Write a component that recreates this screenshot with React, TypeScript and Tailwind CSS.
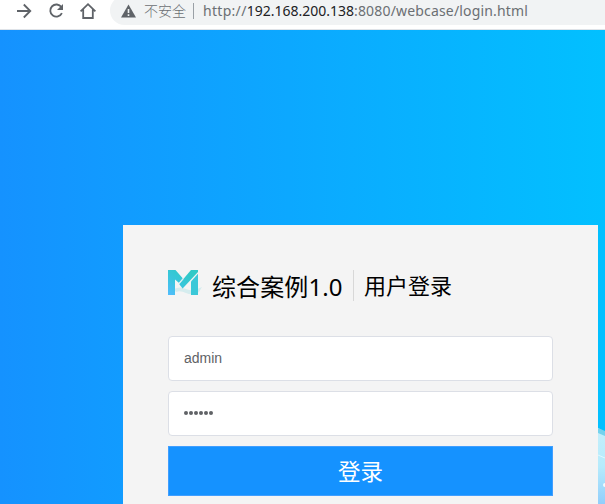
function Toolbar() {
  return (
    <header className="flex h-[30px] items-start border-b border-[#dfe3e8] bg-white">
      <svg className="h-[29px] w-[110px] shrink-0" viewBox="0 0 110 29" fill="none" stroke="#5f6368" strokeWidth="1.8">
        <path d="M17 11H30M23.8 4.5L30.3 11L23.8 17.5" />
        <path d="M61.4 7.1A6.1 6.1 0 1 0 61.9 13.2" />
        <path d="M63 4V10H57Z" fill="#5f6368" stroke="none" />
        <path d="M80.6 11.4L88 4.2L95.4 11.4M83.2 9.5V18H92.8V9.5" />
      </svg>
      <div className="-mt-1 flex h-[29px] flex-1 items-center rounded-l-full bg-[#f1f3f4] pt-[1px] pl-[11px] font-['Noto_Sans','Noto_Sans_CJK_SC',sans-serif] text-[14px] leading-5 text-[#6b6f73]">
        <svg className="mr-[8px] h-[14px] w-[15px] shrink-0" viewBox="0 0 15 14">
          <path d="M7.5 0.5L15 13.5H0Z" fill="#5f6368" />
          <path d="M6.7 5H8.3V9H6.7ZM6.7 10.3H8.3V11.9H6.7Z" fill="#f1f3f4" />
        </svg>
        <span className="-mt-[2px] w-[43px] font-['Noto_Sans_CJK_SC',sans-serif] font-light whitespace-nowrap">不安全</span>
        <span className="mr-[9px] ml-[6px] h-4 w-px bg-[#9aa0a6]" />
        <span className="whitespace-nowrap">
          <span className="tracking-[0.3px]">http://</span>
          <span className="text-[#202124]">192.168.200.138</span>
          <span className="tracking-[0.17px]">:8080/webcase/login.html</span>
        </span>
      </div>
    </header>
  );
}

function Logo() {
  return (
    <svg className="h-[30px] w-[36px] shrink-0" viewBox="0 0 36 30">
      <defs>
        <linearGradient id="logo" gradientUnits="userSpaceOnUse" x1="2" y1="25" x2="20" y2="3">
          <stop offset="0" stopColor="#50bdfb" />
          <stop offset="0.5" stopColor="#38c6dc" />
          <stop offset="1" stopColor="#30c9c7" />
        </linearGradient>
      </defs>
      <path d="M6 19Q12 16 18 19T34 17L31 22Q24 26 18 23T8 22Z" fill="#d5ecee" />
      <path d="M0 0H7.5L14.7 8.2L10.8 12.8L7 9.5V25H0Z" fill="url(#logo)" />
      <path d="M23 0H30V2L14.6 18.6L11.3 14.2L15.4 9Z" fill="url(#logo)" />
      <path d="M30 3.8V25H23V11.4Z" fill="#3bc8d8" />
      <path d="M11 14L15.3 9" fill="none" stroke="#bdeaf0" strokeWidth="0.8" />
    </svg>
  );
}

export default function App() {
  return (
    <div className="flex h-[504px] w-[605px] flex-col overflow-hidden">
      <Toolbar />
      <main className="relative flex flex-1 bg-linear-[90deg] from-[#1592ff] to-[#02c0ff] pt-[195px] pl-[123px]">
        <svg className="absolute right-0 bottom-0 h-[78px] w-[7px]" viewBox="0 0 7 78">
          <defs>
            <linearGradient id="bubble" x1="0" y1="0" x2="0" y2="1">
              <stop offset="0" stopColor="#c4effb" />
              <stop offset="0.5" stopColor="#b6ebfc" />
              <stop offset="1" stopColor="#91cefb" />
            </linearGradient>
          </defs>
          <path d="M0 2L7 6V78H0Z" fill="url(#bubble)" />
          <path d="M0 2L7 5V10L0 7Z" fill="#74d2ed" />
          <path d="M0 29L7 32" stroke="#e0f8ff" />
          <circle cx="7" cy="59" r="2" fill="#f2fbff" />
        </svg>
        <section className="flex w-[475px] shrink-0 flex-col bg-[#f4f4f4] px-[45px] pt-[45px]">
          <div className="flex h-[66px] items-start font-['Noto_Sans','Noto_Sans_CJK_SC',sans-serif] text-black">
            <Logo />
            <h1 className="ml-[8px] w-[141px] pt-[1px] text-[24px] leading-[32px] tracking-[0.1px] whitespace-nowrap">综合案例1.0</h1>
            <h2 className="h-[31px] border-l border-[#d8d8d8] pl-[10px] font-['Noto_Sans_CJK_SC',sans-serif] text-[22px] leading-[29px] whitespace-nowrap">用户登录</h2>
          </div>
          <form className="flex flex-col gap-[10px]">
            <input className="h-[45px] w-full rounded-[4px] border border-[#dcdfe6] bg-white px-[15px] pb-[2px] font-['Liberation_Sans',sans-serif] text-[14px] text-[#606266] outline-none" defaultValue="admin" />
            <div className="flex h-[45px] items-center gap-[1px] rounded-[4px] border border-[#dcdfe6] bg-white px-[15px] pb-px">
              {[0, 1, 2, 3, 4, 5].map((dot) => (
                <span key={dot} className="size-[4px] rounded-full bg-[#606266]" />
              ))}
            </div>
            <button type="button" className="h-[50px] w-full border border-[#409eff] bg-[#1592ff] pb-[3px] font-['Noto_Sans_CJK_SC',sans-serif] text-[22.5px] leading-[30px] text-white">登录</button>
          </form>
        </section>
      </main>
    </div>
  );
}
